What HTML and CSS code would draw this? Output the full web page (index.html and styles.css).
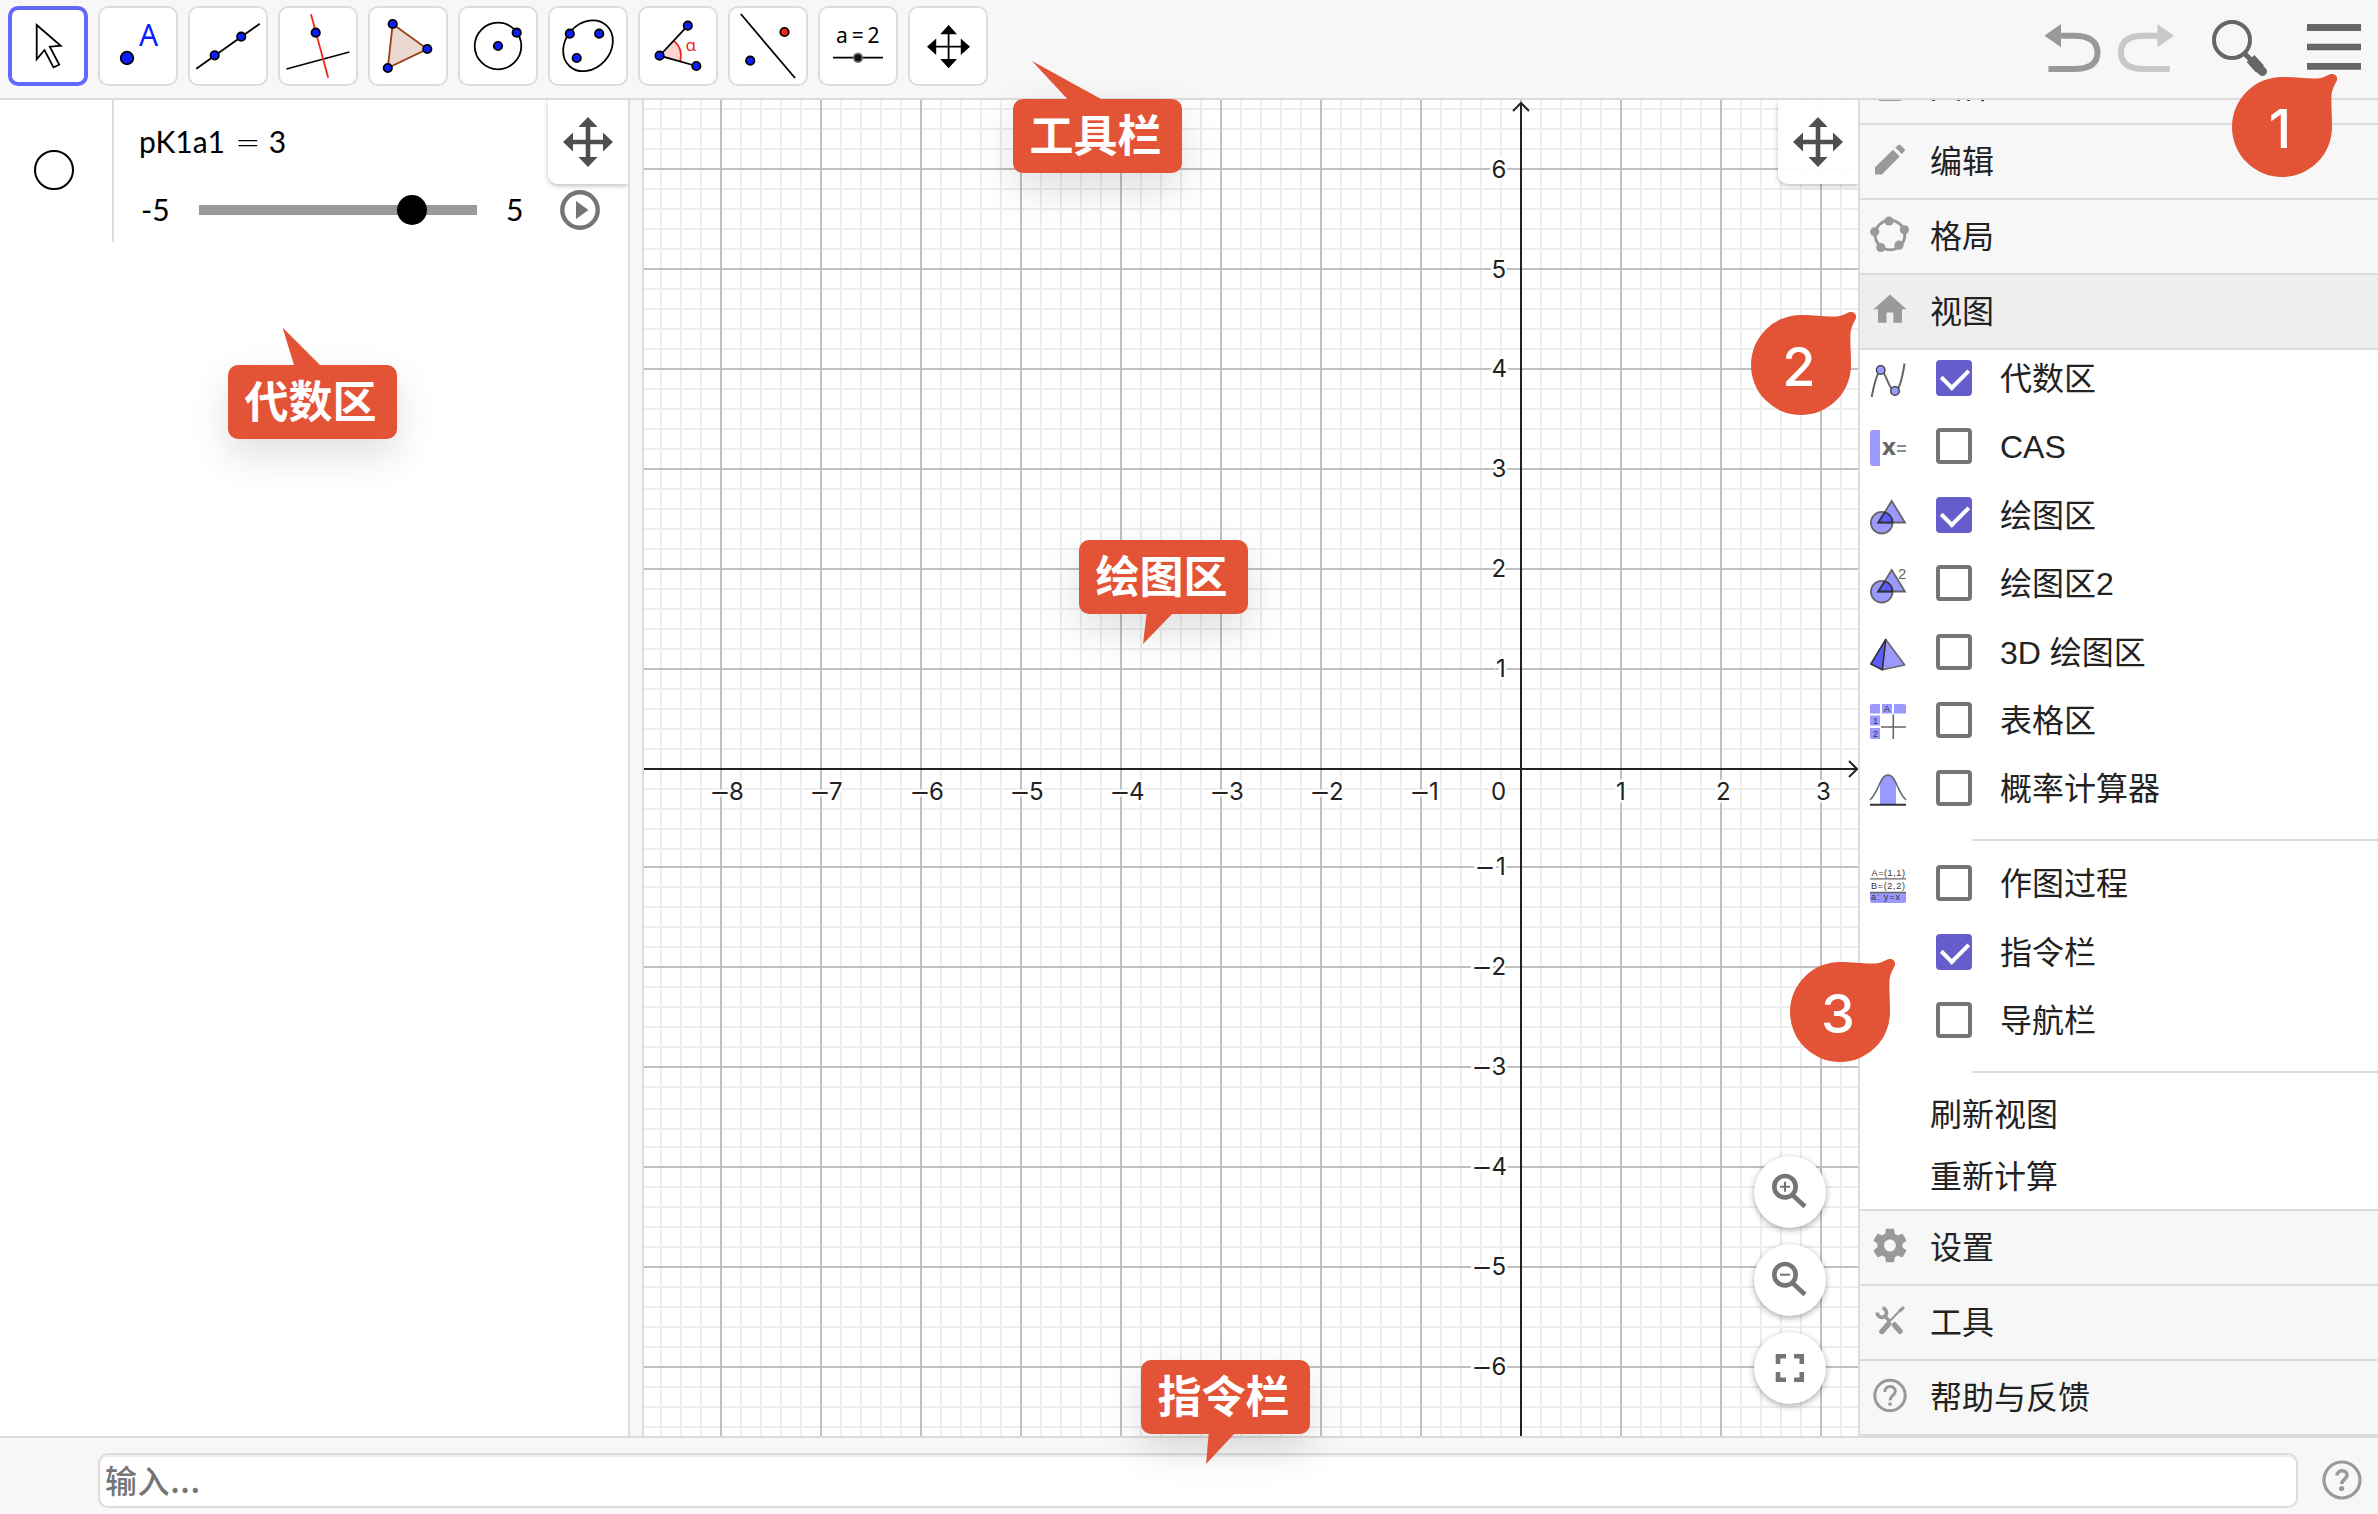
FILE: index.html
```html
<!DOCTYPE html>
<html lang="zh-CN">
<head>
<meta charset="utf-8">
<title>GeoGebra</title>
<link rel="stylesheet" href="styles.css">
</head>
<body>
<header class="toolbar">
  <div class="tools">
    <button class="tool active"><svg viewBox="8 6 80 80"><path class="ink fill-white" d="M36.7 25L60.8 45.7L49.8 46.7L59.2 64.7L53.5 67.3L44.5 50L36.7 59.3Z"/></svg></button>
    <button class="tool"><svg viewBox="98 6 80 80"><circle class="dot" cx="127" cy="58" r="6.3" stroke-width="2.6"/><text class="tool-a" x="139" y="45.7">A</text></svg></button>
    <button class="tool"><svg viewBox="188 6 80 80"><path class="ink" d="M196.3 68.7L259.8 23.7"/><circle class="dot" cx="214.7" cy="55.3" r="4.2"/><circle class="dot" cx="241.2" cy="36.7" r="4.2"/></svg></button>
    <button class="tool"><svg viewBox="278 6 80 80"><path class="ink" d="M286.5 69L349.4 52"/><path class="ink red" d="M311 14.3L328.2 77.7"/><circle class="dot" cx="315.7" cy="32.7" r="4.2"/></svg></button>
    <button class="tool"><svg viewBox="368 6 80 80"><path class="triangle" d="M392.7 24L427.3 49L387.8 68Z"/><circle class="dot" cx="392.7" cy="24" r="4.2"/><circle class="dot" cx="427.3" cy="49" r="4.2"/><circle class="dot" cx="387.8" cy="68" r="4.2"/></svg></button>
    <button class="tool"><svg viewBox="458 6 80 80"><circle class="ink" cx="498" cy="46" r="23.3"/><circle class="dot" cx="498" cy="46" r="4.2"/><circle class="dot" cx="516.7" cy="32.7" r="4.2"/></svg></button>
    <button class="tool"><svg viewBox="548 6 80 80"><ellipse class="ink" cx="588" cy="45.8" rx="27.5" ry="22.5" transform="rotate(-48 588 45.8)"/><circle class="dot" cx="569.8" cy="33.7" r="4.2"/><circle class="dot" cx="599.2" cy="33.7" r="4.2"/><circle class="dot" cx="576.7" cy="58" r="4.2"/></svg></button>
    <button class="tool"><svg viewBox="638 6 80 80"><path class="sector" d="M659.6 55.7L673.9 40.7A21.4 21.4 0 0 1 680.4 61.3Z"/><path class="ink red" d="M673.9 40.7A21.4 21.4 0 0 1 680.4 61.3"/><path class="ink" d="M687.8 25.7L659.6 55.7L696.3 66"/><circle class="dot" cx="687.8" cy="25.7" r="4.2"/><circle class="dot" cx="659.6" cy="55.7" r="4.2"/><circle class="dot" cx="696.3" cy="66" r="4.2"/><text class="alpha" x="685.5" y="51.3">α</text></svg></button>
    <button class="tool"><svg viewBox="728 6 80 80"><path class="ink" d="M740.8 14L795 78"/><circle class="dot" cx="750.2" cy="60.7" r="4.2"/><circle class="dot dot-red" cx="784.5" cy="32" r="4.2"/></svg></button>
    <button class="tool"><svg viewBox="818 6 80 80"><text class="tool-slider" x="836" y="43.3" textLength="43.5">a=2</text><path class="ink" d="M833 57.7H883"/><circle cx="858" cy="57.7" r="5.2" fill="#777"/><circle cx="858" cy="57.7" r="3.5" fill="#111"/></svg></button>
    <button class="tool"><svg viewBox="908 6 80 80"><path class="ink" d="M948.6 30V64M930 46.7H967"/><path d="M948.6 25l8.4 9.3h-16.8zM948.6 68.3l8.4-9.3h-16.8zM927 46.7l9.2-8.2v16.4zM970 46.7l-9.2-8.2v16.4z"/></svg></button>
  </div>
  <svg class="actions" viewBox="2040 0 338 98">
    <g fill="none" stroke="#999" stroke-width="6"><path d="M2058 35.8H2074C2090 35.8 2097.500 42 2097.500 52.500C2097.500 63 2090 69 2074 69H2048.400"/><path fill="#999" stroke="none" d="M2044.400 35.700L2061 24V47.300Z"/></g>
    <g fill="none" stroke="#c8c8c8" stroke-width="6"><path d="M2160 35.8H2144C2128 35.8 2121 42 2121 52.500C2121 63 2128 69 2144 69H2169.700"/><path fill="#c8c8c8" stroke="none" d="M2174 35.700L2157.500 24V47.300Z"/></g>
    <g fill="none" stroke="#666" stroke-linecap="round"><circle cx="2232" cy="40" r="18" stroke-width="4"/><path stroke-width="5" d="M2245 54L2251 60"/><path stroke-width="10.500" stroke-linecap="butt" d="M2250.500 58.500L2260 69"/><path stroke-width="9" d="M2254 63.500L2262.500 71.500"/></g>
    <path fill="#666" d="M2307 24h54v7h-54zM2307 43.700h54v6.500h-54zM2307 63h54v6.800h-54z"/>
  </svg>
</header>

<main class="workspace">
  <section class="algebra">
    <div class="slider-row">
      <div class="marble-cell"><span class="marble"></span></div>
      <div class="slider-body">
        <div class="definition">pK1a1 <span class="eq">=</span> 3</div>
        <div class="slider">
          <span class="min">-5</span>
          <span class="track"><span class="knob"></span></span>
          <span class="max">5</span>
          <svg class="play" viewBox="0 0 40 40"><circle cx="20" cy="20" r="17.700" fill="none" stroke="#757575" stroke-width="4.400"/><path fill="#757575" d="M16 11v18l12.500-9z"/></svg>
        </div>
      </div>
    </div>
    <div class="handle"><svg viewBox="-25 -25 50 50"><path d="M0-18V18M-18 0H18" stroke="#4f4f4f" stroke-width="4.600"/><path fill="#4f4f4f" d="M0-25l9.600 10h-19.200zM0 25l9.600-10h-19.200zM-25 0l10-9.600v19.200zM25 0l-10-9.600v19.200z"/></svg></div>
  </section>
  <div class="splitter"></div>
  <section class="graphics">
    <svg class="plot" id="plot" viewBox="644 100 1214 1336"></svg>
    <div class="handle"><svg viewBox="-25 -25 50 50"><path d="M0-18V18M-18 0H18" stroke="#4f4f4f" stroke-width="4.600"/><path fill="#4f4f4f" d="M0-25l9.600 10h-19.200zM0 25l9.600-10h-19.200zM-25 0l10-9.600v19.200zM25 0l-10-9.600v19.200z"/></svg></div>
    <div class="zoom-buttons">
      <button class="round"><svg viewBox="-36 -36 72 72"><circle cx="-5" cy="-5.300" r="10.700"/><path d="M3 3.500L15 14.500"/><path class="thin" d="M-10-5.300H0M-5-10.300V-.3"/></svg></button>
      <button class="round"><svg viewBox="-36 -36 72 72"><circle cx="-5" cy="-5.300" r="10.700"/><path d="M3 3.500L15 14.500"/><path class="thin" d="M-10-5.300H0"/></svg></button>
      <button class="round"><svg viewBox="-36 -36 72 72"><path d="M-12-4V-11.800H-4M4-11.800H11.800V-4M11.800 4V11.800H4M-4 11.800H-12V4"/></svg></button>
    </div>
  </section>
  <nav class="menu">
    <div class="item clipped"><svg class="icon" viewBox="0 0 40 40"><path fill="#999" d="M9 3h22v31H9z"/></svg>文件</div>
    <div class="item"><svg class="icon" viewBox="1870 141.500 40 40"><path fill="#999" d="M1875 174V166.700L1893 149.300L1899.700 156L1881.800 174ZM1895.400 147.300L1898.200 144.600Q1899.500 143.600 1900.800 144.800L1904.500 148.400Q1905.500 149.600 1904.500 150.800L1901.800 153.500Z"/></svg>编辑</div>
    <div class="item"><svg class="icon" viewBox="1870 216.500 40 40"><circle cx="1890" cy="234.500" r="14.800" fill="none" stroke="#999" stroke-width="3"/><g fill="#999"><circle cx="1889" cy="220.500" r="4.600"/><circle cx="1904.400" cy="229.300" r="4.600"/><circle cx="1899" cy="244.700" r="4.600"/><circle cx="1880.800" cy="247" r="4.600"/><circle cx="1874.700" cy="231.300" r="4.600"/></g></svg>格局</div>
    <div class="item selected"><svg class="icon" viewBox="1870 291.500 40 40"><path fill="#999" d="M1890 294L1906.400 308.700H1902V322.300H1893.400V312H1886.500V322.300H1878V308.700H1873.600Z"/></svg>视图</div>
    <div class="submenu">
      <label class="check"><svg class="mini" viewBox="0 0 36 36"><path fill="none" stroke="#666" stroke-width="2" d="M1.700 35Q6 12 10.500 8C16 9 19 29 25 30C30 27 33 12 34.500 1.500"/><g fill="#9999ff" stroke="#333" stroke-width="1.300"><circle cx="10.700" cy="8" r="4.300"/><circle cx="25" cy="29" r="4.300"/></g></svg><i class="box on"></i><span>代数区</span></label>
      <label class="check"><svg class="mini" viewBox="0 0 36 36"><path fill="#9999ff" d="M10 0V36H3Q0 36 0 33V3Q0 0 3 0Z"/><text class="cas-x" x="12" y="25">x</text><path stroke="#666" stroke-width="1.500" d="M27 16H36M27 21H36"/></svg><i class="box"></i><span>CAS</span></label>
      <label class="check"><svg class="mini" viewBox="0 0 36 36"><g fill="#9999ff" stroke="#666" stroke-width="1.800"><circle cx="11.700" cy="24.700" r="10.800"/><path d="M21.700 3L35 24.500H8.300Z"/></g><path fill="#5c5cff" stroke="#333" stroke-width="1.800" d="M8.300 24.500L14.800 14.300A10.800 10.800 0 0 1 22.500 24.500Z"/></svg><i class="box on"></i><span>绘图区</span></label>
      <label class="check"><svg class="mini" viewBox="0 0 36 36"><g fill="#9999ff" stroke="#666" stroke-width="1.800"><circle cx="11.700" cy="24.700" r="10.800"/><path d="M21.700 3L35 24.500H8.300Z"/></g><path fill="#5c5cff" stroke="#333" stroke-width="1.800" d="M8.300 24.500L14.800 14.300A10.800 10.800 0 0 1 22.500 24.500Z"/><text class="sup" x="28" y="12">2</text></svg><i class="box"></i><span>绘图区2</span></label>
      <label class="check"><svg class="mini" viewBox="0 0 36 36"><g stroke-width="1.600" stroke-linejoin="round"><path fill="#9999ff" stroke="#666" d="M15.700 4.500L34.700 30L12.300 34.700Z"/><path fill="#5c5cff" stroke="#333" d="M15.700 4.500L12.300 34.700L.9 29Z"/></g></svg><i class="box"></i><span>3D 绘图区</span></label>
      <label class="check"><svg class="mini" viewBox="0 0 36 36"><path fill="#9999ff" d="M2 1H10V10.500H0V3Q0 1 2 1ZM12 1H22V10.500H12ZM24 1H34Q36 1 36 3V10.500H24ZM0 12.500H10V22.500H0ZM0 25H10V36H2Q0 36 0 34Z"/><path stroke="#666" stroke-width="1.600" d="M23.300 11.500V36M11 24H36"/><text class="tiny" x="14" y="9">A</text><text class="tiny" x="3" y="21">1</text><text class="tiny" x="3" y="33.500">2</text></svg><i class="box"></i><span>表格区</span></label>
      <label class="check"><svg class="mini" viewBox="0 0 36 36"><path fill="#9999ff" d="M10 32V12C14 4 16 3 18 3C20 3 22 4 26 12V32Z"/><path fill="none" stroke="#666" stroke-width="1.600" d="M0 28C9 20 10 3 18 3S27 20 36 28"/><path stroke="#333" stroke-width="2" d="M0 32.800H36"/></svg><i class="box"></i><span>概率计算器</span></label>
      <hr>
      <label class="check"><svg class="mini" viewBox="0 0 36 36"><path fill="#9999ff" d="M0 25H36V34Q36 36 34 36H2Q0 36 0 34Z"/><path stroke="#666" stroke-width="1.300" d="M0 11.800H36M0 25.500H36"/><text class="tiny" x="1.500" y="8.500" textLength="33.500">A=(1,1)</text><text class="tiny" x="1" y="21.700" textLength="34">B=(2,2)</text><text class="tiny" x="1" y="33" textLength="29">a: y=x</text></svg><i class="box"></i><span>作图过程</span></label>
      <label class="check"><b class="mini"></b><i class="box on"></i><span>指令栏</span></label>
      <label class="check"><b class="mini"></b><i class="box"></i><span>导航栏</span></label>
      <hr>
      <div class="command">刷新视图</div>
      <div class="command">重新计算</div>
    </div>
    <div class="item"><svg class="icon" viewBox="0 0 40 40"><path fill="#999" transform="translate(20 17.500) scale(1.680) translate(-12 -12)" d="M19.430 12.980c.04-.32.07-.64.07-.98s-.03-.66-.07-.98l2.110-1.650c.19-.15.24-.42.12-.64l-2-3.460c-.12-.22-.39-.3-.61-.22l-2.490 1c-.52-.4-1.080-.73-1.690-.98l-.38-2.650C14.460 2.180 14.250 2 14 2h-4c-.25 0-.46.18-.49.42l-.38 2.650c-.61.25-1.170.59-1.690.98l-2.490-1c-.23-.09-.49 0-.61.22l-2 3.460c-.13.22-.07.49.12.64l2.110 1.650c-.04.32-.07.65-.07.98s.03.66.07.98l-2.110 1.650c-.19.15-.24.42-.12.64l2 3.460c.12.22.39.3.61.22l2.490-1c.52.4 1.080.73 1.690.98l.38 2.650c.03.24.24.42.49.42h4c.25 0 .46-.18.49-.42l.38-2.650c.61-.25 1.170-.59 1.690-.98l2.490 1c.23.09.49 0 .61-.22l2-3.460c.12-.22.07-.49-.12-.64l-2.110-1.650zM12 15.500c-1.930 0-3.500-1.570-3.500-3.500s1.570-3.500 3.500-3.500 3.500 1.570 3.500 3.500-1.570 3.500-3.500 3.500z"/></svg>设置</div>
    <div class="item"><svg class="icon" viewBox="0 0 40 40"><g fill="none" stroke="#999"><path stroke-width="3.800" d="M12.500 5.200A4.600 4.600 0 1 1 7.300 9.500"/><path stroke-width="3.500" d="M14.500 13L20 18.500"/><path stroke-width="5.500" stroke-linecap="round" d="M24.500 22L30 28.300M18.500 21L12 28.500"/><path stroke-width="2" d="M17.500 20.500L29 8.500"/><path stroke-width="3.400" d="M29 8.500L34 4.300"/></g></svg>工具</div>
    <div class="item last"><svg class="icon" viewBox="0 0 40 40"><circle cx="20" cy="17.500" r="15.200" fill="none" stroke="#999" stroke-width="3"/><path fill="none" stroke="#999" stroke-width="3" d="M14.800 14C14.800 6.800 25.300 6.800 25.300 13.200C25.300 17.500 20 17.500 20 22.500"/><path fill="#999" d="M18.400 24.500h3.300v3.200h-3.300z"/></svg>帮助与反馈</div>
  </nav>
</main>

<footer class="inputbar">
  <div class="input">输入...</div>
  <svg class="help" viewBox="0 0 40 40"><circle cx="20" cy="20" r="18" fill="none" stroke="#999" stroke-width="3.200"/><path fill="none" stroke="#999" stroke-width="3.600" d="M15 15.500C15.500 8.800 25.500 9.500 25 15.500C24.500 19.500 19.700 19.500 19.700 24"/><circle cx="19.600" cy="28.500" r="2.600" fill="#999"/></svg>
</footer>

<div class="callout callout-tools"><svg viewBox="0 0 169 74"><path d="M19-38L88 0V4H58Z"/></svg>工具栏</div>
<div class="callout callout-algebra"><svg viewBox="0 0 169 74"><path d="M54.500-37.500L92 0V4H66V0Z"/></svg>代数区</div>
<div class="callout callout-graphics"><svg viewBox="0 0 169 74"><path d="M68 70H97L93 74L64 104Z"/></svg>绘图区</div>
<div class="callout callout-input"><svg viewBox="0 0 169 74"><path d="M68 70H97L93 74L65 104Z"/></svg>指令栏</div>

<svg class="pin pin-1" viewBox="-56 -56 112 112"><path d="M0-50C14-50 24-48 35-48.500C42-49 45-51.500 48-52.700C52-54 56-51 55-47C54-44 50.500-40 49.500-32C49-24 50-12 50 0A50 50 0 1 1 0-50Z"/><text x="-2" y="21">1</text></svg>
<svg class="pin pin-2" viewBox="-56 -56 112 112"><path d="M0-50C14-50 24-48 35-48.500C42-49 45-51.500 48-52.700C52-54 56-51 55-47C54-44 50.500-40 49.500-32C49-24 50-12 50 0A50 50 0 1 1 0-50Z"/><text x="-2" y="21">2</text></svg>
<svg class="pin pin-3" viewBox="-56 -56 112 112"><path d="M0-50C14-50 24-48 35-48.500C42-49 45-51.500 48-52.700C52-54 56-51 55-47C54-44 50.500-40 49.500-32C49-24 50-12 50 0A50 50 0 1 1 0-50Z"/><text x="-2" y="21">3</text></svg>
<script src="plot.js"></script>
</body>
</html>
```

FILE: styles.css
```css
* { box-sizing: border-box; }
body {
  margin: 0;
  width: 2378px;
  height: 1514px;
  overflow: hidden;
  position: relative;
  display: flex;
  flex-direction: column;
  background: #fff;
  color: #222;
  font-family: "Liberation Sans", "Noto Sans CJK SC", sans-serif;
}
svg { display: block; overflow: visible; }
button { padding: 0; border: 0; background: #fff; }

.toolbar {
  height: 100px;
  flex: none;
  display: flex;
  justify-content: space-between;
  background: #f7f7f7;
  border-bottom: 2px solid #dcdcdc;
}
.tools { display: flex; gap: 10px; padding: 6px 8px; }
.tool { width: 80px; height: 80px; border-radius: 10px; box-shadow: inset 0 0 0 2px #dcdcdc; }
.tool.active { box-shadow: inset 0 0 0 4px #6368fb; }
.actions { width: 338px; height: 98px; }
.ink { fill: none; stroke: #000; stroke-width: 1.8; }
.fill-white { fill: #fff; }
.red { stroke: #f0281e; }
.dot { fill: #0a1eff; stroke: #000; stroke-width: 1.8; }
.dot-red { fill: #f0281e; }
.triangle { fill: #ead9d1; stroke: #993d14; stroke-width: 1.8; }
.sector { fill: #fbd3d1; }
.tool-a { font: 30px "Noto Sans", sans-serif; fill: #0a1eff; }
.alpha { font: 17px "Noto Sans", sans-serif; fill: #f0281e; }
.tool-slider { font: 21px "Noto Sans", sans-serif; }

.workspace { height: 1336px; flex: none; display: flex; }
.algebra { width: 628px; position: relative; }
.slider-row { display: flex; height: 142px; }
.marble-cell {
  width: 114px;
  border-right: 2px solid #dcdcdc;
  display: flex;
  align-items: center;
  padding: 0 0 2px 34px;
}
.marble { width: 40px; height: 40px; border: 2px solid #000; border-radius: 50%; }
.slider-body { flex: 1; padding: 14px 0 0 25px; font-family: Lato, sans-serif; color: #000; }
.definition { font-size: 30px; line-height: 54px; white-space: pre; }
.eq { display: inline-block; margin: 0 5px 0 6px; font-weight: 300; transform: scaleX(1.5); }
.slider { display: flex; align-items: center; height: 40px; margin-top: 22px; font-size: 30px; }
.min { width: 60px; padding: 0 0 3px 2px; }
.track { width: 278px; height: 10px; background: #999; position: relative; }
.knob { position: absolute; left: 198px; top: -10px; width: 30px; height: 30px; border-radius: 50%; background: #000; }
.max { width: 83px; padding: 0 0 3px 29px; }
.play { width: 40px; height: 40px; }
.handle {
  position: absolute;
  right: 0;
  top: 0;
  width: 80px;
  height: 84px;
  display: flex;
  align-items: center;
  justify-content: center;
  background: rgba(255, 255, 255, .95);
  border-bottom-left-radius: 10px;
  box-shadow: 0 2px 5px rgba(0, 0, 0, .25);
  clip-path: inset(0 0 -10px -10px);
}
.handle svg { width: 50px; height: 50px; }
.splitter { width: 16px; background: #f7f7f7; border: solid #dcdcdc; border-width: 0 2px; }
.graphics { width: 1214px; position: relative; }
.plot { width: 1214px; height: 1336px; overflow: hidden; }
.label {
  font: 24px Inter, sans-serif;
  fill: #222;
  stroke: #fff;
  stroke-width: 5px;
  paint-order: stroke;
}
.zoom-buttons {
  position: absolute;
  right: 32px;
  bottom: 32px;
  display: flex;
  flex-direction: column;
  gap: 16px;
}
.round { width: 72px; height: 72px; border-radius: 50%; box-shadow: 0 2px 6px rgba(0, 0, 0, .35); }
.round svg { fill: none; stroke: #757575; stroke-width: 4.6; }
.round .thin { stroke-width: 2; }

.menu {
  width: 520px;
  border-left: 2px solid #dcdcdc;
  display: flex;
  flex-direction: column;
  justify-content: flex-end;
  overflow: hidden;
  font-size: 32px;
  line-height: 40px;
}
.item {
  height: 75px;
  flex: none;
  display: flex;
  align-items: center;
  gap: 20px;
  padding-left: 10px;
  background: #f7f7f7;
  border-bottom: 2px solid #dcdcdc;
}
.item.selected { background: #eee; }
.icon { width: 40px; height: 40px; }
.submenu { height: 861px; flex: none; display: flex; flex-direction: column; border-bottom: 2px solid #dcdcdc; }
.check { height: 56px; flex: none; margin-bottom: 12.4px; padding-left: 10px; display: flex; align-items: center; }
.check span { margin-top: 2px; }
.mini { width: 36px; height: 36px; margin: 3px 30px 0 0; }
.box { width: 36px; height: 36px; margin-right: 28px; border: 4px solid #757575; border-radius: 4px; display: flex; }
.box.on { background: #645dcb; border-color: #645dcb; }
.box.on::after {
  content: "";
  width: 25px;
  height: 13px;
  margin: 3px 0 0 2px;
  border: solid #fff;
  border-width: 0 0 4px 4px;
  transform: rotate(-45deg);
}
.submenu hr { flex: none; margin: 10.4px 0 14px 112px; height: 2px; border: 0; background: #dcdcdc; }
.submenu hr + .command { margin-top: -2.5px; }
.command { height: 62px; flex: none; line-height: 62px; padding-left: 70px; }
.cas-x { font: bold 24px "Noto Sans", sans-serif; fill: #666; }
.sup { font: 15px "Liberation Sans", sans-serif; fill: #666; }
.tiny { font: 9px "Liberation Sans", sans-serif; fill: #333; }

.inputbar {
  flex: 1;
  display: flex;
  align-items: flex-start;
  gap: 24px;
  padding: 15px 0 0 98px;
  background: #f7f7f7;
  border-top: 2px solid #dcdcdc;
}
.input {
  width: 2200px;
  height: 55px;
  padding-left: 5px;
  border: 2px solid #dcdcdc;
  border-radius: 10px;
  background: #fff;
  box-shadow: inset 0 2px 1px #eee;
  color: #757575;
  font: 500 32px/49px "Noto Sans CJK SC", sans-serif;
  letter-spacing: .6px;
}
.help { width: 40px; height: 40px; margin-top: 7px; }

.callout {
  position: absolute;
  width: 169px;
  height: 74px;
  padding-right: 4px;
  border-radius: 10px;
  background: #e35336;
  box-shadow: 0 16px 40px rgba(0, 0, 0, .13);
  color: #fff;
  font: bold 44px/69px "Noto Sans CJK SC", sans-serif;
  text-align: center;
}
.callout svg { position: absolute; inset: 0; fill: #e35336; }
.callout-tools { left: 1013px; top: 99px; }
.callout-algebra { left: 228px; top: 365px; }
.callout-graphics { left: 1079px; top: 540px; }
.callout-input { left: 1141px; top: 1360px; }
.pin { position: absolute; width: 112px; height: 112px; fill: #e35336; }
.pin text { font: 500 54px Inter, sans-serif; fill: #fff; text-anchor: middle; }
.pin-1 { left: 2226px; top: 71px; }
.pin-2 { left: 1745px; top: 309px; }
.pin-3 { left: 1784px; top: 956px; }
```

FILE: plot.js
```js
const NS = 'http://www.w3.org/2000/svg';
const plot = document.getElementById('plot');
const ORIGIN_X = 1521;
const ORIGIN_Y = 769;

function add(parent, tag, attrs, text) {
  const el = document.createElementNS(NS, tag);
  for (const key in attrs) el.setAttribute(key, attrs[key]);
  if (text !== undefined) el.textContent = text;
  parent.appendChild(el);
  return el;
}

// Negative numbers carry a wide minus sign in front of the digit.
function label(n, minusX, digitX, y) {
  const text = add(plot, 'text', { y, class: 'label' });
  if (n < 0) {
    add(text, 'tspan', { x: minusX, textLength: 22, lengthAdjust: 'spacingAndGlyphs' }, '\u2212');
  }
  add(text, 'tspan', { x: digitX }, Math.abs(n));
}

function rowY(k) {
  const snapped = k >= 5 && k !== 17 && k !== 18;
  return ORIGIN_Y + 20 * k - (snapped ? 2 : 0);
}

let minor = '';
let major = '';
for (let k = -43; k <= 16; k++) {
  const x = ORIGIN_X + 20 * k;
  const line = `M${x} 100V1436`;
  if (k % 5 === 0) major += line; else minor += line;
}
for (let k = -33; k <= 33; k++) {
  const line = `M644 ${rowY(k)}H1858`;
  if (k % 5 === 0) major += line; else minor += line;
}
add(plot, 'path', { d: minor, stroke: '#000', 'stroke-opacity': 0.07, 'stroke-width': 2, fill: 'none' });
add(plot, 'path', { d: major, stroke: '#c0c0c0', 'stroke-width': 2, fill: 'none' });

for (let n = -8; n <= 3; n++) {
  if (n === 0) continue;
  const x = ORIGIN_X + 100 * n;
  label(n, x - 12, n < 0 ? x + 8 : x - 5, 800);
}
label(0, 0, 1491, 800);
for (let n = -6; n <= 6; n++) {
  if (n === 0) continue;
  const one = Math.abs(n) === 1;
  label(n, one ? 1474 : 1471, one ? 1496 : 1491.5, rowY(-5 * n) + (n >= 5 ? 8.5 : 7.5));
}
add(plot, 'path', {
  d: 'M1521 103V1436M644 769H1857M1513 111L1521 103L1529 111M1849 761L1857 769L1849 777',
  stroke: '#222', 'stroke-width': 2, fill: 'none'
});
```
